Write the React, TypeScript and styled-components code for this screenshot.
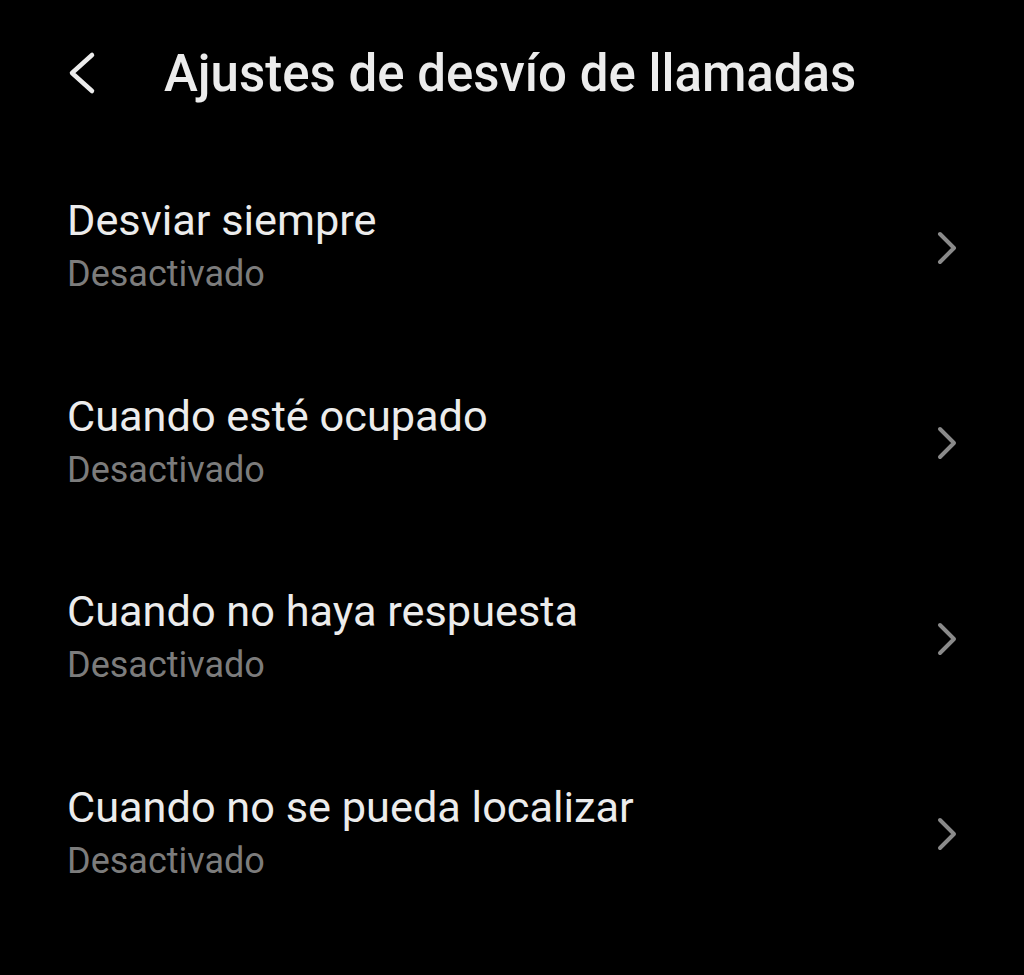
import React from 'react';
import styled, { createGlobalStyle } from 'styled-components';

const ITEMS = [
  { title: 'Desviar siempre', status: 'Desactivado' },
  { title: 'Cuando esté ocupado', status: 'Desactivado' },
  { title: 'Cuando no haya respuesta', status: 'Desactivado' },
  { title: 'Cuando no se pueda localizar', status: 'Desactivado' },
];

const GlobalStyle = createGlobalStyle`
  html, body {
    margin: 0;
    padding: 0;
    background: #000;
  }
  body {
    font-family: Roboto, "Noto Sans", sans-serif;
  }
`;

const BackIcon = () => (
  <svg width="34" height="44" viewBox="0 0 34 44" fill="none">
    <path d="M26 4 L6 22 L26 40" stroke="#ececec" strokeWidth="4.5" strokeLinecap="round" strokeLinejoin="round" />
  </svg>
);

const ChevronIcon = () => (
  <svg width="26" height="36" viewBox="0 0 26 36" fill="none">
    <path d="M6 4 L20 18 L6 32" stroke="#8a8a8a" strokeWidth="4" strokeLinecap="round" strokeLinejoin="round" />
  </svg>
);

const App = () => {
  return (
    <Screen>
      <GlobalStyle />
      <Header>
        <BackButton>
          <BackIcon />
        </BackButton>
        <Title>Ajustes de desvío de llamadas</Title>
      </Header>
      <List>
        {ITEMS.map((item) => (
          <Row key={item.title}>
            <RowText>
              <RowTitle>{item.title}</RowTitle>
              <RowStatus>{item.status}</RowStatus>
            </RowText>
            <ChevronIcon />
          </Row>
        ))}
      </List>
    </Screen>
  );
};

const Screen = styled.div`
  width: 1024px;
  height: 975px;
  background: #000;
  overflow: hidden;
`;

const Header = styled.div`
  display: flex;
  align-items: center;
  height: 150px;
  padding-left: 66px;
  box-sizing: border-box;
  padding-bottom: 4px;
`;

const BackButton = styled.div`
  display: flex;
  align-items: center;
  width: 98px;
`;

const Title = styled.h1`
  margin: 0;
  font-size: 51px;
  font-weight: 500;
  color: #ececec;
  letter-spacing: 0;
`;

const List = styled.div`
  display: flex;
  flex-direction: column;
`;

const Row = styled.div`
  display: flex;
  align-items: center;
  justify-content: space-between;
  height: 195.5px;
  padding: 0 64px 0 67px;
  box-sizing: border-box;
`;

const RowText = styled.div`
  display: flex;
  flex-direction: column;
  gap: 5px;
  margin-top: -4px;
`;

const RowTitle = styled.div`
  font-size: 43.3px;
  color: #ececec;
  line-height: 52px;
`;

const RowStatus = styled.div`
  font-size: 36px;
  color: #7c7c7c;
  line-height: 44px;
`;

export default App;
